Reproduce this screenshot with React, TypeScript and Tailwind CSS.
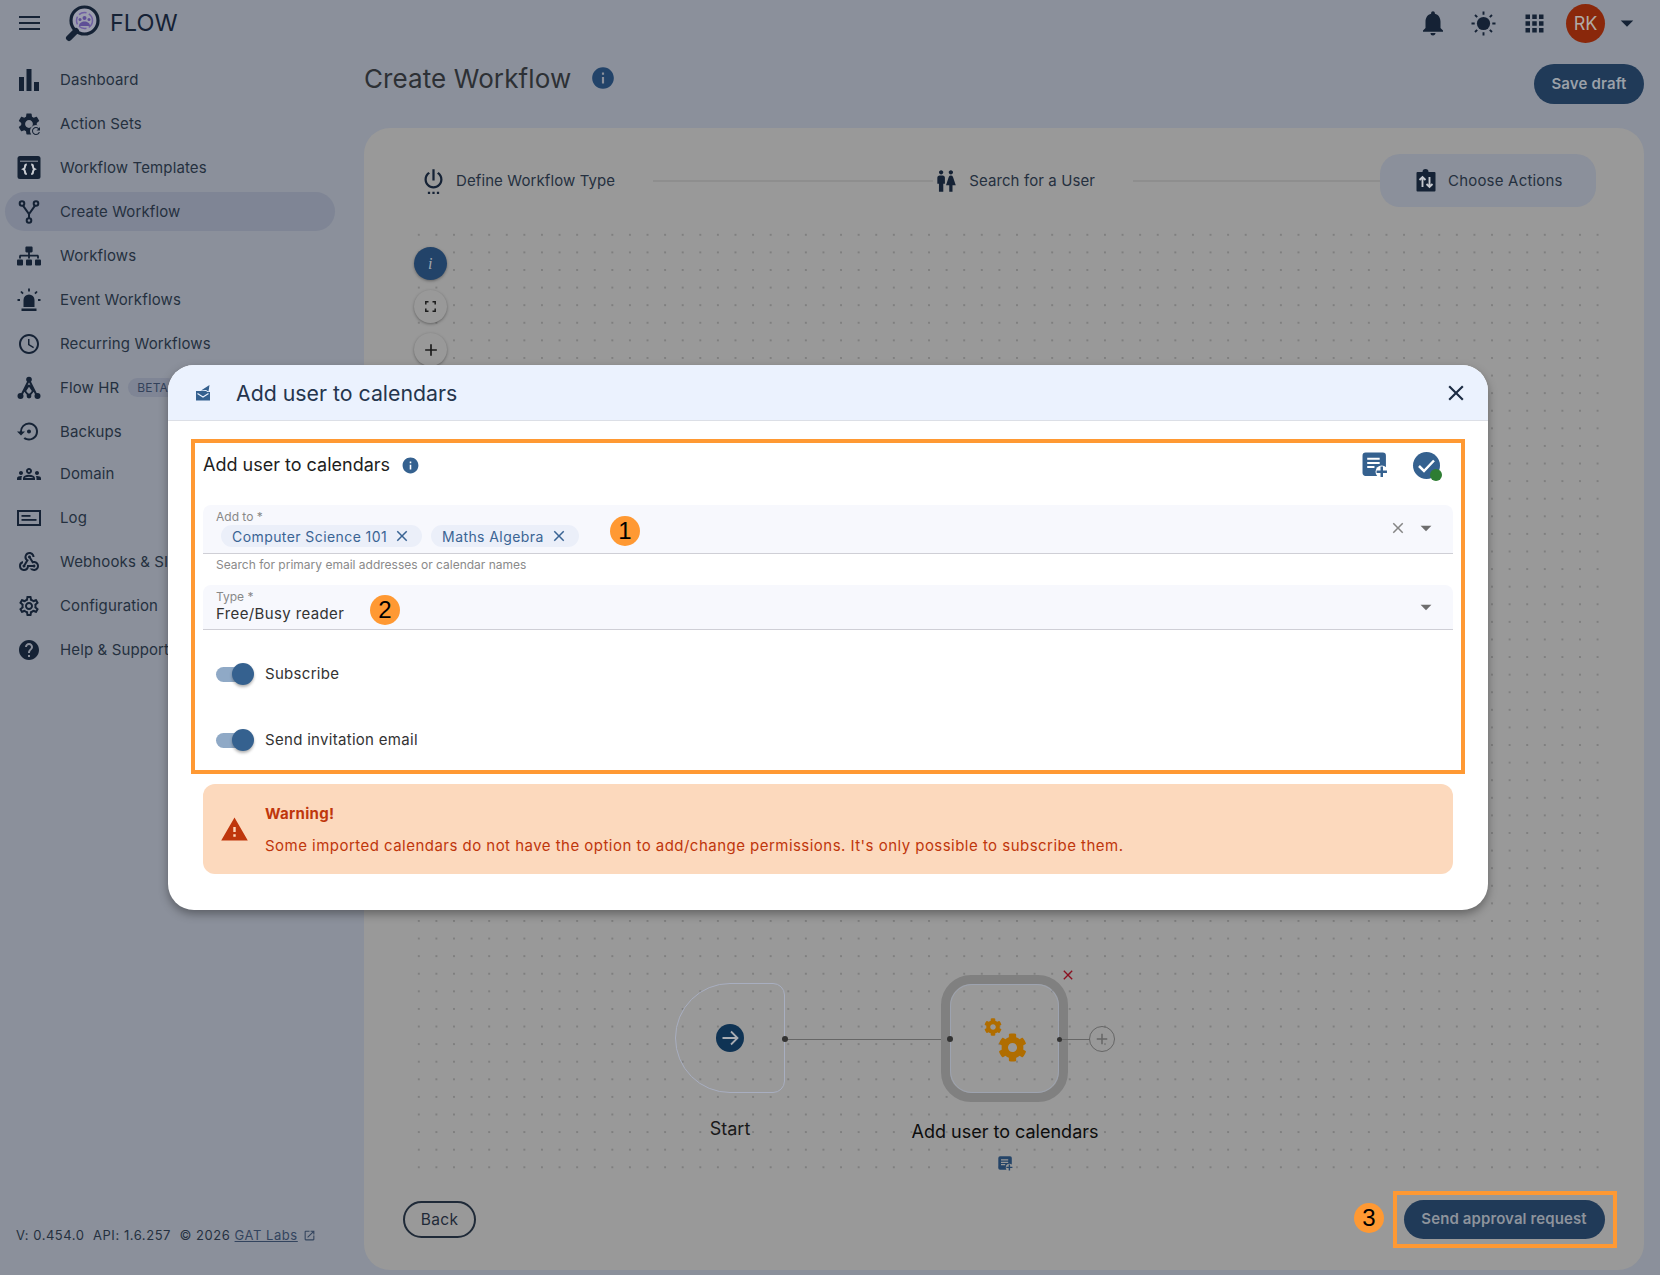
import type { ReactNode } from "react";
import {
  MdAccessTime,
  MdAdd,
  MdApps,
  MdArrowDropDown,
  MdClose,
  MdHelp,
  MdInfo,
  MdNotifications,
  MdOpenInNew,
  MdOutlineGroups,
  MdOutlineSettings,
  MdOutlineWebhook,
  MdRefresh,
  MdSettings,
  MdSettingsBackupRestore,
  MdSettingsPower,
  MdWarning,
  MdWc,
} from "react-icons/md";
import { FaCog, FaSitemap } from "react-icons/fa";

const Logo = () => (
  <svg width="36" height="37" viewBox="0 0 36 37" className="shrink-0">
    <circle cx="19.5" cy="15.500" r="13.500" fill="#9c9eae" stroke="#152235" strokeWidth="3.200" />
    <circle cx="19.5" cy="15.500" r="8" fill="none" stroke="#6f5fa3" strokeWidth="1.500" strokeDasharray="8 2.500" />
    <circle cx="19.5" cy="13" r="2" fill="#5e4f96" />
    <circle cx="15" cy="14.500" r="1.500" fill="#5e4f96" />
    <circle cx="24" cy="14.500" r="1.500" fill="#5e4f96" />
    <path d="M14 21c0-6 11-6 11 0z" fill="#5e4f96" />
    <path d="M11 26 L4 33" stroke="#152235" strokeWidth="6" strokeLinecap="round" />
  </svg>
);

const BarsIcon = () => (
  <svg width="20" height="22" viewBox="0 0 20 22" fill="#152235">
    <rect x="0" y="8" width="5" height="14" />
    <rect x="7.5" y="0" width="5" height="22" />
    <rect x="15" y="13" width="5" height="9" />
  </svg>
);

const ActionSetIcon = () => (
  <span className="relative block w-[26px] h-[26px] text-[#152235]">
    <MdSettings size={26} />
    <span className="absolute right-0 bottom-0 w-[12px] h-[12px] rounded-full bg-[#8b909b] flex items-center justify-center">
      <MdRefresh size={12} />
    </span>
  </span>
);

const TemplateIcon = () => (
  <svg width="24" height="23" viewBox="0 0 24 23">
    <rect x="0.5" y="0" width="23" height="23" rx="2.5" fill="#152235" />
    <path d="M3 5.2h18" stroke="#8b909b" strokeWidth="1.100" />
    <path
      d="M9.800 8.500c-1.800 0-1.800 1-1.800 2.200 0 1.200-.7 2-1.700 2.500 1 .5 1.700 1.300 1.700 2.500s0 2.200 1.800 2.200M14.200 8.500c1.800 0 1.800 1 1.800 2.200 0 1.200.7 2 1.700 2.500-1 .5-1.700 1.300-1.700 2.500s0 2.200-1.800 2.200"
      fill="none"
      stroke="#c9ccd2"
      strokeWidth="2"
    />
  </svg>
);

const ForkIcon = () => (
  <svg width="24" height="24" viewBox="0 0 24 24" fill="none" stroke="#152235" strokeWidth="2">
    <circle cx="5" cy="3.500" r="2.300" />
    <circle cx="19" cy="3.500" r="2.300" />
    <circle cx="12" cy="20.500" r="2.300" />
    <path d="M6 5.700 L12 14 L18 5.700 M12 14 V18" />
  </svg>
);

const SirenIcon = () => (
  <svg width="24" height="24" viewBox="0 0 24 24" fill="#152235">
    <path d="M6.500 19v-7a5.500 5.500 0 0 1 11 0v7z" />
    <rect x="4.500" y="20.500" width="15" height="2.500" />
    <path d="M12 0.500v3M4 3.500l2 2.200M20 3.500l-2 2.200M0.500 12h2.500M21 12h2.500" stroke="#152235" strokeWidth="1.800" />
  </svg>
);

const HrIcon = () => (
  <svg width="24" height="24" viewBox="0 0 24 24" fill="#152235">
    <path d="M12 4 L4 20 M12 4 L20 20 M12 9 L8 15 L12 20 M12 9 L16 15 L12 20" stroke="#152235" strokeWidth="2" fill="none" />
    <circle cx="12" cy="3.500" r="2.800" />
    <circle cx="3.500" cy="20" r="3" />
    <circle cx="20.500" cy="20" r="3" />
    <circle cx="12" cy="20" r="2.400" />
  </svg>
);

const LogIcon = () => (
  <svg width="24" height="16" viewBox="0 0 24 16" fill="#152235">
    <rect x="1" y="1" width="22" height="14" fill="none" stroke="#152235" strokeWidth="2" />
    <rect x="4.500" y="5" width="9" height="1.800" />
    <rect x="4.500" y="9" width="15" height="1.800" />
  </svg>
);

const SunIcon = () => (
  <svg width="25" height="25" viewBox="0 0 25 25" fill="#152235">
    <circle cx="12.500" cy="12.500" r="6.600" />
    <path
      d="M12.500 0.500v3.200M12.500 21.300v3.200M0.500 12.500h3.200M21.300 12.500h3.200M4 4l2.200 2.200M18.800 18.800L21 21M4 21l2.200-2.200M18.800 6.200L21 4"
      stroke="#152235"
      strokeWidth="1.900"
    />
  </svg>
);

const ChooseIcon = () => (
  <svg width="20" height="23" viewBox="0 0 20 23">
    <path d="M1.500 3h5a3 3 0 0 1 6 0h6a1 1 0 0 1 1 1v17.500a1 1 0 0 1-1 1h-17a1 1 0 0 1-1-1V4a1 1 0 0 1 1-1z" fill="#152235" />
    <path d="M6.500 18V8M3.500 11l3-3 3 3M13.500 8v10M10.500 15l3 3 3-3" fill="none" stroke="#c4c7cd" strokeWidth="1.900" />
  </svg>
);

const MailSendIcon = () => (
  <svg width="14" height="16" viewBox="0 0 14 16" fill="#35618f">
    <path d="M0 6h10l1.500 1H14v8.500H0z" />
    <path d="M1.500 8.500L7 12l5.500-3.500" fill="none" stroke="#ebf2fe" strokeWidth="1.100" />
    <path d="M5 5.500L13.500 0 12.500 6.500 10 5z" />
  </svg>
);

const DocPlusIcon = ({ size, fill, line, ring }: { size: number; fill: string; line: string; ring: string }) => (
  <svg width={size} height={size} viewBox="0 0 25 25">
    <rect x="0.500" y="0.500" width="22.500" height="22.500" rx="3" fill={fill} />
    <path d="M5 6.500h12M5 10.500h12M5 14.500h7" stroke={line} strokeWidth="2" />
    <circle cx="19" cy="19" r="6" fill={ring} />
    <path d="M19 14v10M14 19h10" stroke={fill} strokeWidth="2.400" />
  </svg>
);

const navItems: { label: string; icon: ReactNode; active?: boolean; beta?: boolean; tight?: boolean }[] = [
  { label: "Dashboard", icon: <BarsIcon /> },
  { label: "Action Sets", icon: <ActionSetIcon /> },
  { label: "Workflow Templates", icon: <TemplateIcon /> },
  { label: "Create Workflow", icon: <ForkIcon />, active: true },
  { label: "Workflows", icon: <FaSitemap size={24} /> },
  { label: "Event Workflows", icon: <SirenIcon /> },
  { label: "Recurring Workflows", icon: <MdAccessTime size={26} /> },
  { label: "Flow HR", icon: <HrIcon />, beta: true },
  { label: "Backups", icon: <MdSettingsBackupRestore size={27} /> },
  { label: "Domain", icon: <MdOutlineGroups size={28} />, tight: true },
  { label: "Log", icon: <LogIcon /> },
  { label: "Webhooks & SIEM", icon: <MdOutlineWebhook size={26} /> },
  { label: "Configuration", icon: <MdOutlineSettings size={26} /> },
  { label: "Help & Support", icon: <MdHelp size={26} /> },
];

const Toggle = ({ label }: { label: string }) => (
  <div className="flex items-center h-[44px] pl-[13px]">
    <span className="relative block w-[34px] h-[15px] rounded-full bg-[#8fa9c6]">
      <span className="absolute right-[-4px] top-[-4px] w-[22px] h-[22px] rounded-full bg-[#35618f] shadow-[0_2px_3px_rgba(0,0,0,0.3)]" />
    </span>
    <span className="ml-[15px] text-[15px] tracking-[0.3px] text-[#333]">{label}</span>
  </div>
);

const Chip = ({ label }: { label: string }) => (
  <span className="flex items-center h-[22px] pl-[11px] pr-[11px] rounded-full bg-[#ebeff9] text-[14px] tracking-[0.42px] text-[#3a6494]">
    {label}
    <MdClose size={18} className="ml-[6px]" />
  </span>
);

const Badge = ({ n, className }: { n: number; className: string }) => (
  <span
    className={`absolute w-[30px] h-[30px] rounded-full bg-[#ff9933] flex items-center justify-center font-['Liberation_Sans',sans-serif] text-[24px] text-black tracking-normal ${className}`}
  >
    {n}
  </span>
);

const Modal = () => (
  <div className="absolute left-[168px] top-[365px] w-[1320px] h-[545px] rounded-[26px] bg-white shadow-[0_4px_10px_rgba(0,0,0,0.35)] overflow-hidden">
    <div className="flex items-center h-[56px] bg-[#ebf2fe] border-b border-[#dcdfe6] pl-[28px] pr-[19px]">
      <MailSendIcon />
      <span className="ml-[26px] pt-[2px] text-[21.300px] tracking-normal text-[#25354d]">Add user to calendars</span>
      <MdClose size={26} className="ml-auto text-[#1c2c44]" />
    </div>

    <div className="relative mt-[18px] ml-[23px] w-[1274px] h-[335px] border-[4px] border-[#ff9933] px-[8px]">
      <div className="flex items-center h-[44px]">
        <span className="pb-[2px] text-[18px] tracking-normal text-[#1d1d1d]">Add user to calendars</span>
        <MdInfo size={19} className="ml-[11px] text-[#35618f]" />
        <span className="ml-auto flex items-center mr-[13px]">
          <DocPlusIcon size={26} fill="#35618f" line="#fff" ring="#fff" />
          <span className="relative block w-[27px] h-[27px] ml-[25px] rounded-full bg-[#35618f]">
            <svg width="27" height="27" viewBox="0 0 27 27">
              <path d="M6 14l5 5L21 8.500" fill="none" stroke="#fff" strokeWidth="2.500" />
            </svg>
            <span className="absolute right-[-2px] bottom-[-2px] w-[12px] h-[12px] rounded-full bg-[#2e7d32]" />
          </span>
        </span>
      </div>

      <div className="mt-[18px] h-[49px] rounded-t-[8px] bg-[#f7f8fd] border-b border-[#cfcfd6] pl-[13px] pr-[14px] flex items-center">
        <div className="flex-1 -mt-[1px]">
          <div className="text-[12px] tracking-normal leading-[14px] text-[#888]">Add to *</div>
          <div className="flex items-center gap-[9px] ml-[5px] mt-[1px]">
            <Chip label="Computer Science 101" />
            <Chip label="Maths Algebra" />
          </div>
        </div>
        <MdClose size={18} className="text-[#858585] -mt-[2px]" />
        <MdArrowDropDown size={26} className="ml-[6px] -mt-[2px] text-[#6e6e6e]" />
      </div>
      <div className="h-[22px] pl-[13px] flex items-center text-[12px] tracking-normal text-[#8a8a8a]">
        Search for primary email addresses or calendar names
      </div>

      <div className="mt-[9px] h-[44.500px] rounded-t-[8px] bg-[#f7f8fd] border-b border-[#cfcfd6] pl-[13px] pr-[14px] flex items-center">
        <div className="flex-1">
          <div className="text-[12px] tracking-normal leading-[14px] text-[#888]">Type *</div>
          <div className="text-[15px] leading-[20px] text-[#333]">Free/Busy reader</div>
        </div>
        <MdArrowDropDown size={26} className="text-[#6e6e6e]" />
      </div>

      <div className="mt-[22.500px] flex flex-col gap-[22px]">
        <Toggle label="Subscribe" />
        <Toggle label="Send invitation email" />
      </div>

      <Badge n={1} className="left-[415px] top-[73px]" />
      <Badge n={2} className="left-[175px] top-[152px]" />
    </div>

    <div className="mt-[10px] mx-[35px] h-[90px] rounded-[12px] bg-[#fcd9bd] flex items-center text-[#bf360c]">
      <MdWarning size={29} className="ml-[17px] shrink-0" />
      <div className="ml-[16px] pt-[2px]">
        <div className="text-[15px] font-bold tracking-[0.3px] leading-[20px]">Warning!</div>
        <div className="mt-[12px] text-[15px] tracking-[0.47px] leading-[20px]">
          Some imported calendars do not have the option to add/change permissions. It's only possible to subscribe them.
        </div>
      </div>
    </div>
  </div>
);

const CanvasButton = ({ children, dark }: { children: ReactNode; dark?: boolean }) => (
  <span
    className={`w-[33px] h-[33px] rounded-full flex items-center justify-center shadow-[0_1px_3px_rgba(0,0,0,0.35)] ${
      dark ? "bg-[#224369] text-[#a3a7ad]" : "bg-[#999] text-[#1b1b1b]"
    }`}
  >
    {children}
  </span>
);

export default function App() {
  return (
    <div className="relative h-[1275px] overflow-hidden bg-[#8b909b] font-['Inter',sans-serif] tracking-[0.375px] text-[#25303f] flex flex-col">
      {/* top bar */}
      <header className="h-[46px] shrink-0 flex items-center text-[#152235]">
        <svg width="21" height="14" viewBox="0 0 21 14" fill="#152235" className="ml-[19px]">
          <rect y="0" width="21" height="2" />
          <rect y="6" width="21" height="2" />
          <rect y="12" width="21" height="2" />
        </svg>
        <span className="ml-[25px]">
          <Logo />
        </span>
        <span className="ml-[9px] text-[23.500px] tracking-normal">FLOW</span>
        <span className="ml-auto flex items-center">
          <MdNotifications size={30} />
          <span className="ml-[23px]">
            <SunIcon />
          </span>
          <MdApps size={27} className="ml-[25px]" />
          <span className="ml-[18px] w-[39px] h-[39px] rounded-full bg-[#8a280b] text-[#b0aaa5] text-[18px] tracking-normal flex items-center justify-center">
            RK
          </span>
          <MdArrowDropDown size={30} className="ml-[7px] mr-[18px]" />
        </span>
      </header>

      <div className="flex flex-1 min-h-0">
        {/* sidebar */}
        <aside className="w-[364px] shrink-0 flex flex-col">
          <nav className="mt-[14px] flex flex-col gap-[5px]">
            {navItems.map((item) => (
              <div
                key={item.label}
                className={`flex items-center h-[39px] w-[330px] ml-[5px] pl-[12px] rounded-full text-[15px] tracking-[0.12px] whitespace-nowrap ${
                  item.active ? "bg-[#7f8595]" : ""
                } ${item.tight ? "-mt-[2px]" : ""}`}
              >
                <span className="w-[24px] h-[24px] shrink-0 flex items-center justify-center text-[#152235]">{item.icon}</span>
                <span className="ml-[19px] pt-[2px]">{item.label}</span>
                {item.beta && (
                  <span className="ml-[9px] h-[19px] px-[9px] rounded-full bg-[#7f8595] text-[12px] text-[#33415a] flex items-center">
                    BETA
                  </span>
                )}
              </div>
            ))}
          </nav>
          <div className="mt-auto mb-[30px] ml-[16px] flex items-center text-[13px] tracking-[0.55px] whitespace-pre">
            <span>V: 0.454.0  API: 1.6.257  © 2026 </span>
            <span className="underline text-[#33445e]">GAT Labs</span>
            <MdOpenInNew size={13} className="ml-[5px] text-[#33445e]" />
          </div>
        </aside>

        {/* main */}
        <main className="flex-1 min-w-0 flex flex-col mr-[16px] mb-[5px]">
          <div className="h-[82px] shrink-0 flex items-start">
            <h1 className="mt-[15px] text-[26px] tracking-[0.1px] leading-[36px] font-normal text-[#2d3035]">Create Workflow</h1>
            <MdInfo size={26} className="ml-[19px] mt-[19px] text-[#224369]" />
            <button className="ml-auto mt-[18px] h-[40px] w-[110px] rounded-full bg-[#203a58] text-[15px] tracking-[0.15px] font-semibold text-[#9aa0a8]">
              Save draft
            </button>
          </div>

          <section className="flex-1 min-h-0 rounded-[26px] bg-[#999] flex flex-col">
            <div className="mt-[26px] h-[53px] shrink-0 ml-[56px] mr-[48px] flex items-center text-[15px] tracking-[0.1px] whitespace-nowrap text-[#25303f]">
              <MdSettingsPower size={27} className="text-[#152235] shrink-0" />
              <span className="ml-[9px] pt-[2px]">Define Workflow Type</span>
              <span className="ml-[38px] w-[280px] h-[2px] bg-[#8e8e8e]" />
              <MdWc size={26} className="text-[#152235] shrink-0" />
              <span className="ml-[10px] pt-[2px]">Search for a User</span>
              <span className="ml-[38px] flex-1 h-[2px] bg-[#8e8e8e]" />
              <span className="w-[216px] h-[53px] rounded-[20px] bg-[#8b909b] flex items-center pl-[36px]">
                <ChooseIcon />
                <span className="ml-[12px] pt-[2px] tracking-[0.2px]">Choose Actions</span>
              </span>
            </div>

            {/* canvas */}
            <div className="relative flex-1 min-h-0 mt-[19px] ml-[46px] mr-[37px] bg-[radial-gradient(circle,#787878_0.6px,transparent_1px)] bg-[size:17.600px_17.600px]">
              <div className="absolute left-[4px] top-[21px] flex flex-col gap-[10px]">
                <CanvasButton dark>
                  <span className="font-['Liberation_Serif',serif] italic text-[16px]">i</span>
                </CanvasButton>
                <CanvasButton>
                  <svg width="11" height="11" viewBox="0 0 11 11" fill="none" stroke="#1b1b1b" strokeWidth="1.500">
                    <path d="M0.800 3.500V0.800H3.500M7.500 0.800h2.700v2.700M10.200 7.500v2.700H7.500M3.500 10.200H0.800V7.500" />
                  </svg>
                </CanvasButton>
                <CanvasButton>
                  <MdAdd size={20} />
                </CanvasButton>
              </div>

              {/* start node */}
              <div className="absolute left-[265px] top-[757px] w-[110px] h-[110px] rounded-l-[55px] rounded-r-[12px] border border-[#a8aec0] flex items-center justify-center">
                <span className="w-[28px] h-[28px] rounded-full bg-[#0f3354] flex items-center justify-center">
                  <svg width="18" height="18" viewBox="0 0 18 18" fill="none" stroke="#a9adb3" strokeWidth="1.800">
                    <path d="M1.500 9h15M10 2.500L16.500 9 10 15.500" />
                  </svg>
                </span>
              </div>
              <span className="absolute left-[375px] top-[813px] w-[165px] h-px bg-[#666]" />
              <span className="absolute left-[372px] top-[810px] w-[6px] h-[6px] rounded-full bg-[#333]" />
              <div className="absolute left-[220px] top-[889px] w-[200px] text-center text-[18px] text-[#1a1a1a] tracking-normal">Start</div>

              {/* action node */}
              <div className="absolute left-[531px] top-[749px] w-[127px] h-[127px] rounded-[30px] border-[9px] border-[#808080]">
                <div className="relative w-full h-full rounded-[22px] border border-[#9da3b0]">
                  <FaCog size={18} className="absolute left-[33px] top-[33px] text-[#b06d00]" />
                  <FaCog size={29} className="absolute left-[47px] top-[48px] text-[#b06d00]" />
                </div>
              </div>
              <span className="absolute left-[537px] top-[810px] w-[6px] h-[6px] rounded-full bg-[#333]" />
              <span className="absolute left-[647px] top-[811px] w-[5px] h-[5px] rounded-full bg-[#333]" />
              <span className="absolute left-[652px] top-[813px] w-[28px] h-px bg-[#666]" />
              <span className="absolute left-[679px] top-[800px] w-[26px] h-[26px] rounded-full border border-[#666] flex items-center justify-center text-[#666]">
                <MdAdd size={18} />
              </span>
              <MdClose size={16} className="absolute left-[650px] top-[741px] text-[#8b1020]" />
              <div className="absolute left-[495px] top-[892px] w-[200px] text-center text-[18px] text-[#0d0d0d] tracking-normal whitespace-nowrap">
                Add user to calendars
              </div>
              <span className="absolute left-[588px] top-[930px]">
                <DocPlusIcon size={15} fill="#244468" line="#999" ring="#999" />
              </span>
            </div>

            {/* footer */}
            <div className="relative h-[57px] shrink-0 mt-[14px] mb-[22px] pl-[39px] pr-[27px] flex items-center justify-between">
              <button className="w-[73px] h-[37px] rounded-full border-2 border-[#1f2a38] text-[15.500px] text-[#1f2a38]">Back</button>
              <div className="flex items-center">
                <div className="relative flex items-center justify-center w-[224px] h-[57px] border-[4px] border-[#ff9933]">
                  <button className="w-[201px] h-[39px] -ml-[2px] rounded-full bg-[#203a58] text-[15px] tracking-[0.1px] font-semibold text-[#8d939c]">
                    Send approval request
                  </button>
                  <Badge n={3} className="left-[-43px] top-[8px]" />
                </div>
              </div>
            </div>
          </section>
        </main>
      </div>

      <Modal />
    </div>
  );
}
